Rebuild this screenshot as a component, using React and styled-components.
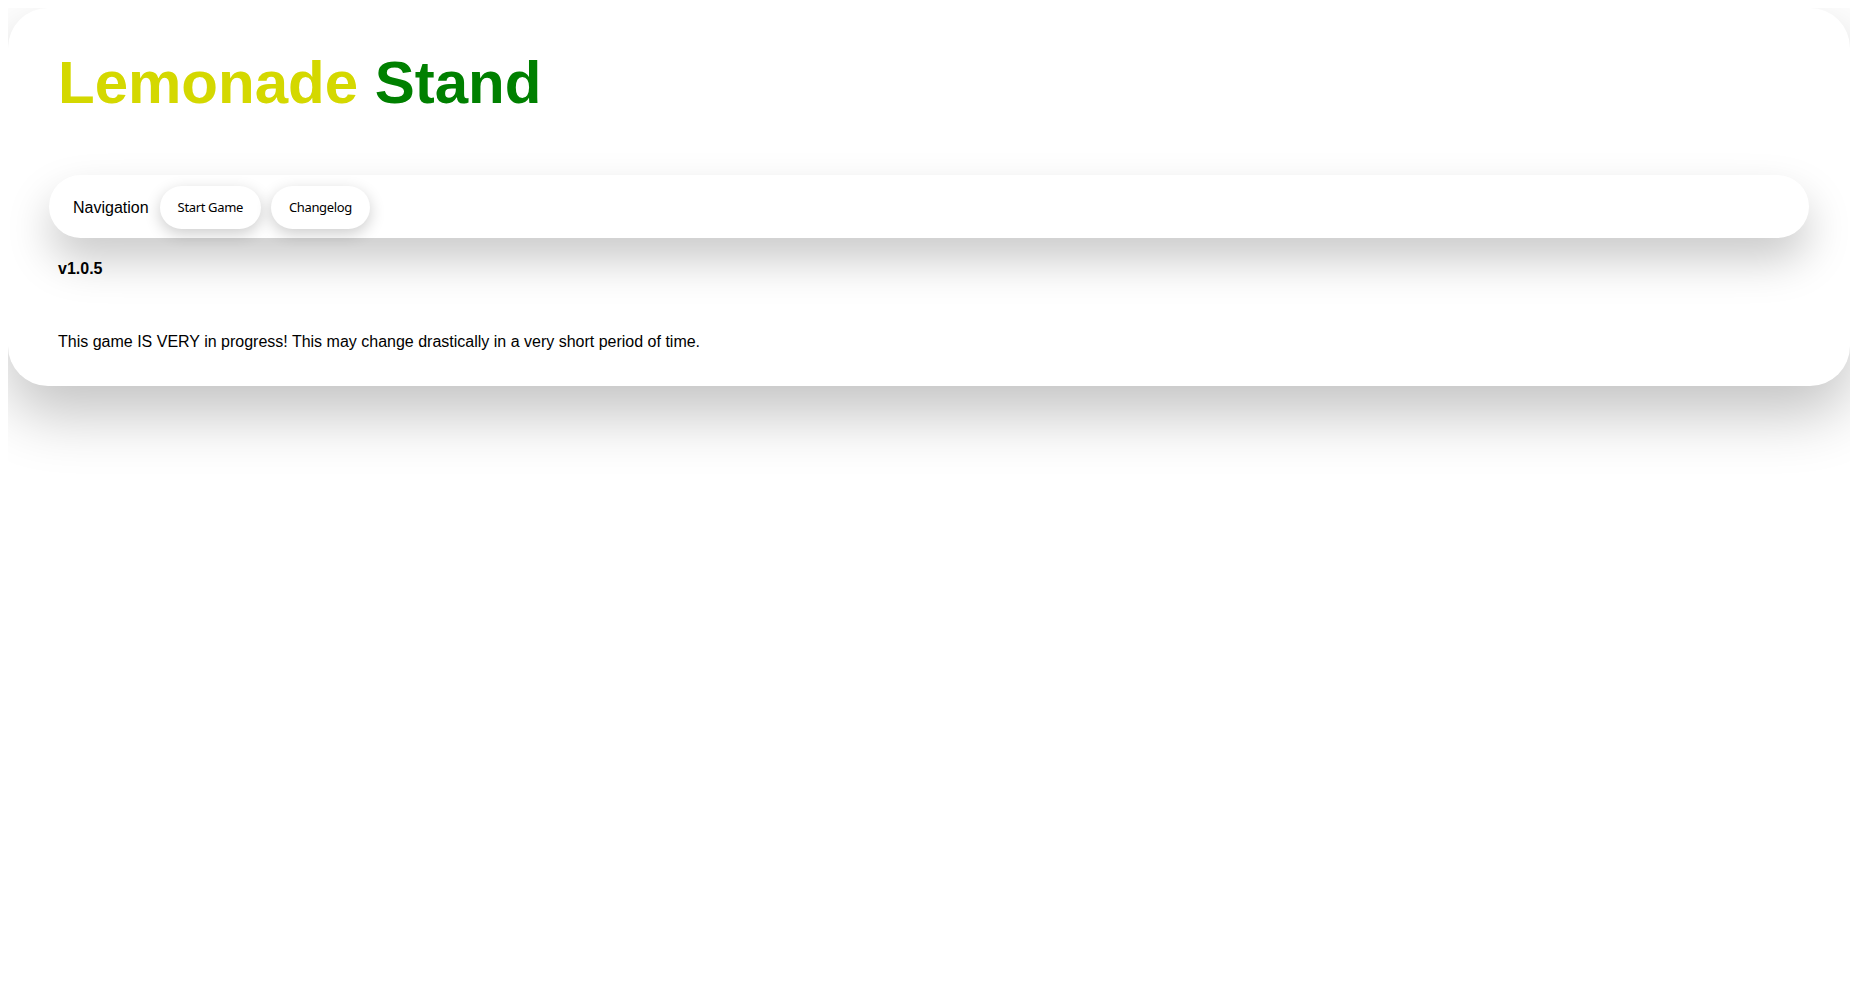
import React from 'react';
import styled, { createGlobalStyle } from 'styled-components';

const GlobalStyle = createGlobalStyle`
  html {
    min-height: 100%;
  }
  body {
    margin: 8px;
    min-height: calc(100vh - 16px);
    background: #fff;
    font-family: "Liberation Sans", Arial, sans-serif;
    color: #000;
  }
`;

const Card = styled.main`
  background: #fff;
  border-radius: 40px;
  padding: 40px 41px 34px;
  box-shadow: 0 28px 60px rgba(0, 0, 0, 0.24);
`;

const Title = styled.h1`
  margin: 0 9px 58px;
  font-size: 60px;
  line-height: 1.15;
  font-weight: 700;
`;

const Word = styled.span`
  color: ${(props) => props.color};
`;

const Nav = styled.nav`
  display: flex;
  align-items: center;
  gap: 10px;
  height: 63px;
  box-sizing: border-box;
  padding: 1px 24px 0;
  background: #fff;
  border-radius: 32px;
  box-shadow: 0 22px 44px rgba(0, 0, 0, 0.21);
`;

const NavLabel = styled.span`
  font-size: 16px;
  margin: 2px 1px 0 0;
`;

const NavButton = styled.button`
  height: 43px;
  padding: 0 18px;
  border: none;
  border-radius: 22px;
  background: #fff;
  color: #000;
  font-family: "Noto Sans", "DejaVu Sans", sans-serif;
  font-size: 13px;
  letter-spacing: -0.35px;
  cursor: pointer;
  box-shadow: 0 5px 16px rgba(0, 0, 0, 0.2);
`;

const Version = styled.p`
  margin: 22px 9px 0;
  font-size: 16px;
  line-height: 1.15;
  font-weight: 700;
`;

const Notice = styled.p`
  margin: 55px 9px 0;
  font-size: 16px;
  line-height: 1.15;
`;

export default function App() {
  return (
    <>
      <GlobalStyle />
      <Card>
        <Title>
          <Word color="#d4d800">Lemonade</Word> <Word color="#008000">Stand</Word>
        </Title>
        <Nav>
          <NavLabel>Navigation</NavLabel>
          <NavButton>Start Game</NavButton>
          <NavButton>Changelog</NavButton>
        </Nav>
        <Version>v1.0.5</Version>
        <Notice>
          This game IS VERY in progress! This may change drastically in a very short period of time.
        </Notice>
      </Card>
    </>
  );
}
